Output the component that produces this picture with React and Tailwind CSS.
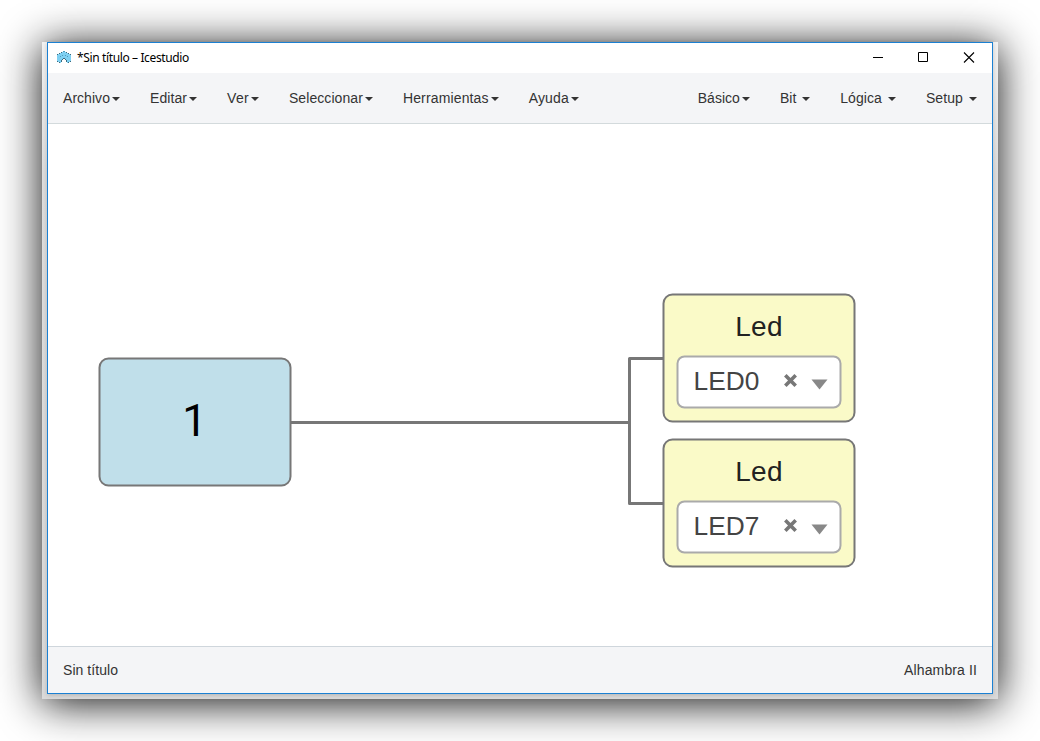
import React from "react";

const leftMenus = [
  { label: "Archivo", spacing: "tracking-[0.04px]" },
  { label: "Editar", spacing: "tracking-[0.08px]" },
  { label: "Ver", spacing: "tracking-[0.3px]" },
  { label: "Seleccionar", spacing: "tracking-[0.07px]" },
  { label: "Herramientas", spacing: "tracking-[0.15px]" },
  { label: "Ayuda", spacing: "tracking-[0.15px]" },
];
const rightMenus = [
  { label: "Básico", spacing: "tracking-[0.02px]" },
  { label: "Bit ", spacing: "tracking-[0.02px]" },
  { label: "Lógica ", spacing: "tracking-[0.08px]" },
  { label: "Setup ", spacing: "tracking-[0.1px]" },
];

function Menu({ label, spacing }) {
  return (
    <button className={"flex h-full items-center px-[15px] whitespace-pre " + spacing}>
      {label}
      <span className="mt-[2px] ml-[2px] h-0 w-0 border-x-4 border-t-4 border-x-transparent border-t-[#333]" />
    </button>
  );
}

function AppIcon() {
  return (
    <svg className="-mt-[2px] h-3 w-[14px]" viewBox="0 0 14 12" shapeRendering="crispEdges">
      <path d="M0 3h2V2h2V1h2V0h2v1h2v1h2v1h2v8h-2v1h-2v-2H9V9H8V8H6v1H5v1H4v2H2v-1H0z" fill="#7fd0f2" />
      <path d="M0 3h1v1H0zM2 2h1v1H2zM4 1h1v1H4zM9 1h1v1H9zM11 2h1v1h-1zM13 3h1v1h-1zM0 10h1v1H0zM2 11h1v1H2zM4 9h1v2H4zM5 8h1v1H5zM6 7h2v1H6zM8 8h1v1H8zM9 9h1v2H9zM11 11h1v1h-1zM13 10h1v1h-1z" fill="#3b6a7e" />
      <path d="M6 0h2v1H6zM3 5h1v1H3zM5 4h1v1H5zM8 4h1v1H8zM10 5h1v1h-1z" fill="#4e9dbc" />
    </svg>
  );
}

function LedBlock({ pin, className }) {
  return (
    <div className={"absolute left-[614px] flex h-[129px] w-[193px] translate-[0.5px] flex-col items-center rounded-[10px] border-2 border-[#777] bg-[#fafac8] " + className}>
      <div className="mt-[15px] text-[28px] leading-8 tracking-[0.3px] text-[#222]">Led</div>
      <div className="mt-[13px] flex h-[53px] w-[165px] shrink-0 items-center rounded-[8px] border-2 border-[#aaa] bg-white pl-[15px]">
        <span className="-mt-[4px] w-[90px] text-[26.3px] leading-8 text-[#444]">{pin}</span>
        <svg className="-mt-[3px] h-[14px] w-[14px]" viewBox="0 0 14 14" fill="none" stroke="#777" strokeWidth="3.6">
          <path d="M1.8 1.8l10.4 10.4M12.2 1.8L1.8 12.2" />
        </svg>
        <span className="mt-[5px] ml-[14px] h-0 w-0 border-x-8 border-t-[10px] border-x-transparent border-t-[#888]" />
      </div>
    </div>
  );
}

export default function App() {
  return (
    <div className="h-[741px] w-[1040px] overflow-hidden bg-white px-[42px] pt-[42px] font-['Liberation_Sans',Arial,sans-serif] text-sm text-[#333]">
      <div className="h-[657px] w-[956px] bg-linear-to-b from-[#f2f2f2] via-[#dedede] via-20% to-[#dadada] px-[5px] pb-[5px] shadow-[0_4px_40px_0_rgba(0,0,0,0.95)]">
        <div className="flex h-[652px] w-[946px] flex-col border border-[#1b80d2] bg-white shadow-[0_1px_5px_rgba(0,0,0,0.18)]">
          <header className="flex h-[30px] shrink-0 items-center pl-[9px] font-['Noto_Sans',sans-serif] text-xs text-black">
            <AppIcon />
            <span className="ml-[6px] text-[12px] tracking-[-0.37px]">*Sin título – Icestudio</span>
            <svg className="-mt-[1px] ml-auto h-[11px] w-[102px]" viewBox="0 0 102 11" fill="none" stroke="#000">
              <path d="M0 5.5h10M45.5.5h9v9h-9z" />
              <path d="M91 .5l10 10M101 .5l-10 10" strokeWidth="1.1" />
            </svg>
            <span className="w-[17px]" />
          </header>
          <nav className="flex h-[51px] shrink-0 items-stretch justify-between border-b border-[#d3dadc] bg-[#f4f5f7]">
            <div className="flex">
              {leftMenus.map((m) => <Menu key={m.label} {...m} />)}
            </div>
            <div className="flex">
              {rightMenus.map((m) => <Menu key={m.label} {...m} />)}
            </div>
          </nav>
          <main className="relative min-h-0 flex-1 bg-white">
            <svg className="absolute top-0 left-0 h-[522px] w-[944px]" viewBox="0 0 944 522" fill="none" stroke="#777" strokeWidth="3">
              <path d="M243 298.5H581.5M615 234.5H581.5V379.5H615" strokeLinejoin="round" />
            </svg>
            <div className="absolute top-[233px] left-[50px] flex h-[129px] w-[193px] translate-[0.5px] items-center justify-center rounded-[10px] border-2 border-[#777] bg-[#c0dfea] pr-px pb-[3px] font-['Roboto',sans-serif] text-[44px] text-black">
              1
            </div>
            <LedBlock pin="LED0" className="top-[169px]" />
            <LedBlock pin="LED7" className="top-[314px]" />
          </main>
          <footer className="flex h-[47px] shrink-0 items-center justify-between border-t border-[#cfd6dc] bg-[#f4f5f7] px-[15px]">
            <span className="tracking-[0.06px]">Sin título</span>
            <span className="tracking-[0.12px]">Alhambra II</span>
          </footer>
        </div>
      </div>
    </div>
  );
}
